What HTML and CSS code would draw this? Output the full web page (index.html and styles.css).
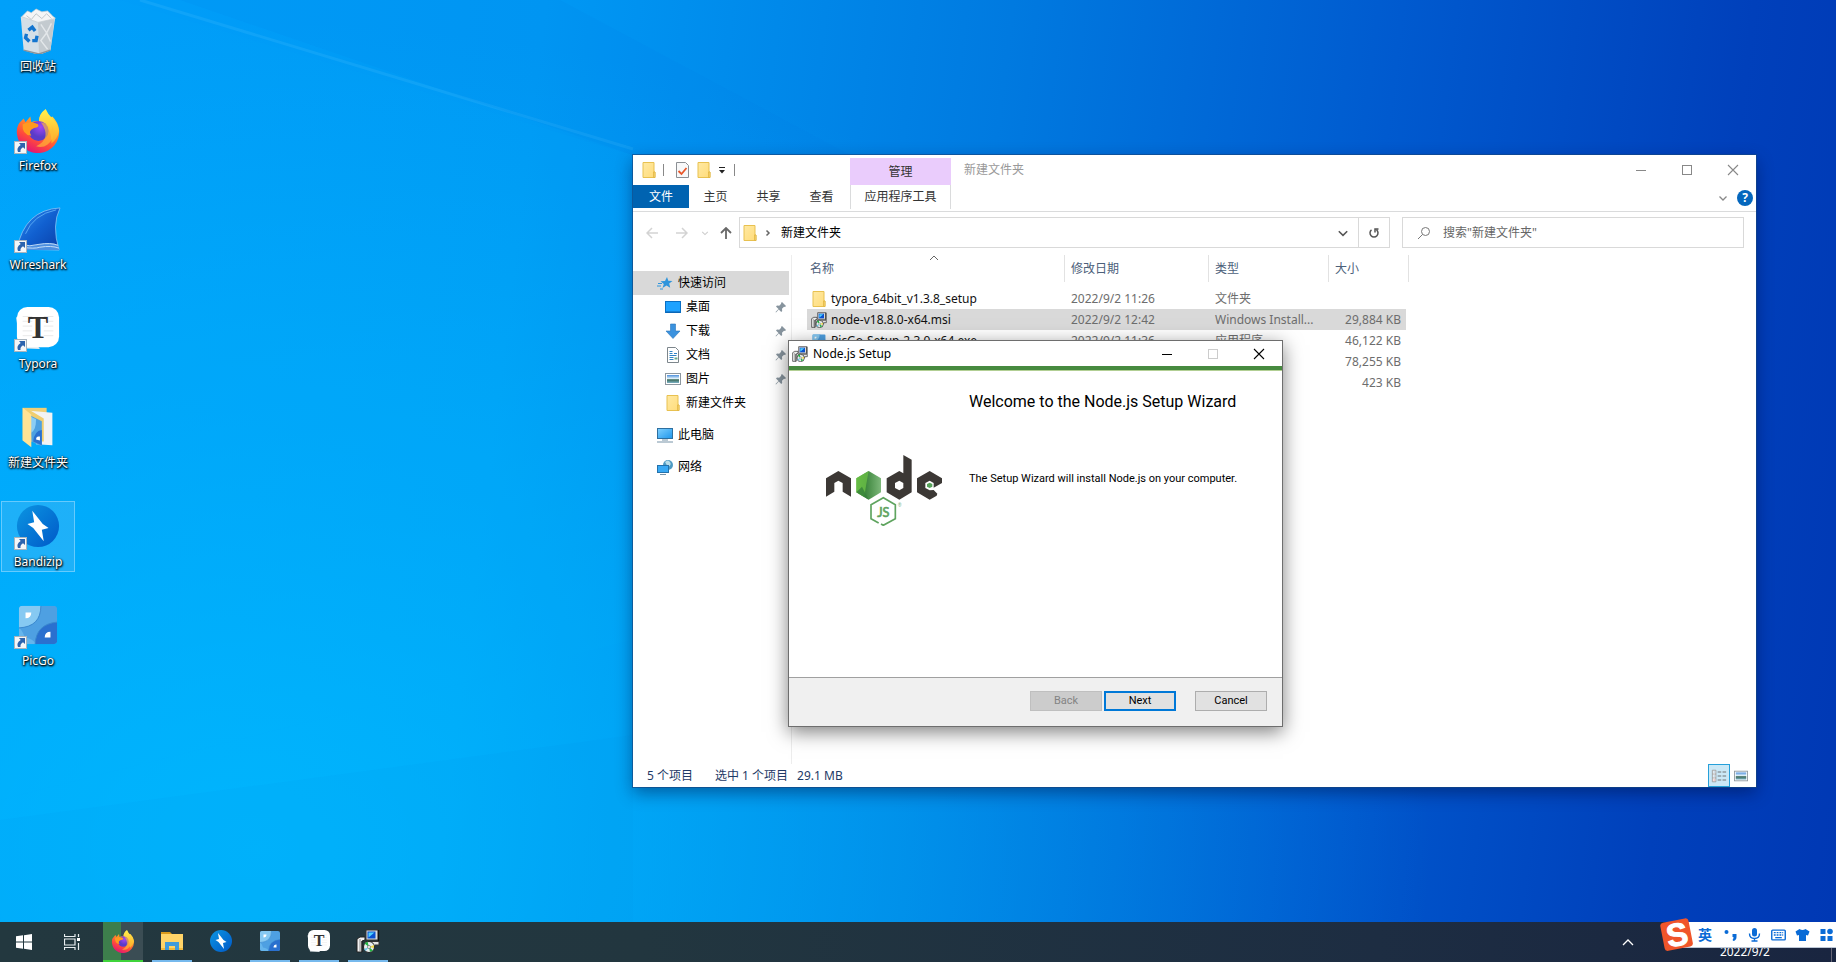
FILE: index.html
```html
<!DOCTYPE html>
<html lang="zh-CN">
<head>
<meta charset="utf-8">
<title>Desktop</title>
<link rel="stylesheet" href="styles.css">
</head>
<body>
<svg class="defs" aria-hidden="true">
  <defs>
    <linearGradient id="gFox" x1=".8" y1="0" x2=".3" y2="1"><stop offset="0" stop-color="#fff04a"/><stop offset=".35" stop-color="#ff9a28"/><stop offset=".7" stop-color="#ff4a3c"/><stop offset="1" stop-color="#e0107a"/></linearGradient>
    <radialGradient id="gGlobe" cx=".6" cy=".3"><stop offset="0" stop-color="#a347f5"/><stop offset="1" stop-color="#5a3cc8"/></radialGradient>
    <linearGradient id="gFlame" x1=".5" y1="0" x2=".5" y2="1"><stop offset="0" stop-color="#fff34f"/><stop offset="1" stop-color="#ffa726"/></linearGradient>
    <linearGradient id="gFin" x1="0" y1="0" x2="1" y2="1"><stop offset="0" stop-color="#2f8df0"/><stop offset=".5" stop-color="#1160d0"/><stop offset="1" stop-color="#0a3fa8"/></linearGradient>
    <linearGradient id="gBandi" x1="0" y1="0" x2="1" y2="1"><stop offset="0" stop-color="#0b95e2"/><stop offset="1" stop-color="#0059c8"/></linearGradient>
    <linearGradient id="gFolder" x1="0" y1="0" x2="1" y2="1"><stop offset="0" stop-color="#ffe9a3"/><stop offset="1" stop-color="#ffdc7a"/></linearGradient>
    <linearGradient id="gNode" x1="0" y1="0" x2="1" y2="0"><stop offset="0" stop-color="#65bc46"/><stop offset=".4" stop-color="#3f873f"/><stop offset="1" stop-color="#7db87a"/></linearGradient>
    <linearGradient id="gScreen" x1="0" y1="0" x2="1" y2="1"><stop offset="0" stop-color="#7fd0ff"/><stop offset="1" stop-color="#1e96ec"/></linearGradient>
    <linearGradient id="gPhoto" x1="0" y1="0" x2="0" y2="1"><stop offset="0" stop-color="#4c8fdc"/><stop offset=".45" stop-color="#e2f2fb"/><stop offset=".6" stop-color="#3d6b5a"/><stop offset="1" stop-color="#7cb2c6"/></linearGradient>
    <clipPath id="cPic"><rect x="4" y="4" width="40" height="40" rx="4"/></clipPath>
  </defs>
  <symbol id="i-shortcut" viewBox="0 0 13 13"><rect x=".5" y=".5" width="12" height="12" fill="#f4f6f8" stroke="#a9b4bd"/><path d="M5 2h6v6L9 6.300Q6 8 6.500 11H4Q2 7 6.700 4z" fill="#2c63ae"/></symbol>
  <symbol id="i-firefox" viewBox="0 0 48 48">
    <path d="M9 12l2 4 5-6 1 6q4-2 8-1 0-8 7-12 1 5 5 8l2-1q6 6 7 14a22 22 0 0 1-44 4q-1-9 5-14z" fill="url(#gFox)"/>
    <path d="M25 15q0-8 7-13 2 5 7 10 6 5 7 13-2 9-8 13 1-17-13-23z" fill="url(#gFlame)"/>
    <circle cx="24.500" cy="25" r="10.500" fill="url(#gGlobe)"/>
    <path d="M8 18q8-4 16 0 2 3-4 4-7 3-3 8-10-1-9-12z" fill="#ff9a1f"/><path d="M27 16q9 1 10 11 3-4 1-8 6 12-4 20-5 4-12 2 17-8 5-25z" fill="#ffbd35" opacity=".65"/>
  </symbol>
  <symbol id="i-bandizip" viewBox="0 0 48 48"><circle cx="24" cy="24" r="22" fill="url(#gBandi)"/><path d="M18 8l11 14 6 4-7 2 2 12-11-14-6-4 7-2z" fill="#fff"/></symbol>
  <symbol id="i-picgo" viewBox="0 0 48 48"><g clip-path="url(#cPic)"><rect x="4" y="4" width="40" height="40" fill="#4ea0e2"/><path d="M4 4h23Q27 26 4 27z" fill="#86c9f2"/><path d="M4 27q4 2 6 10 9 1 12 7H4z" fill="#65b5ec"/><path d="M44 21v23H21q1-21 23-23z" fill="#2a70cf"/><path d="M27 4Q27 26 4 27M44 21Q22 23 21 44" fill="none" stroke="#3a86cd"/><path d="M11 11h6q0 6-6 6zM37 31v6h-6q0-6 6-6z" fill="#fff"/></g></symbol>
  <symbol id="i-typora" viewBox="0 0 48 48"><path d="M1 12l5 33 20 1z" fill="#e8ecef"/><rect x="2" y="2" width="44" height="42" rx="11" fill="#fff"/><path d="M8 12h32M8 17h32M8 22h32M8 27h32M8 32h32" stroke="#e8e8e8"/><rect x="18" y="10" width="12" height="24" fill="#fff"/><text x="24" y="34" class="glyph-t">T</text></symbol>
  <symbol id="i-folder" viewBox="0 0 16 16"><path d="M2 .5h11v9.500h1v5.500H2z" fill="url(#gFolder)" stroke="#e8c150"/><path d="M12.500 15.500V10h1.500v5.500z" fill="#f8d775" stroke="#e0b13c" stroke-width=".7"/></symbol>
  <symbol id="i-installer" viewBox="0 0 24 24">
    <path d="M1 10l3-2h5v3l-3 1v11H1z" fill="#f2f2f2" stroke="#222"/><path d="M4 10v12" stroke="#888"/><path d="M6 12v11" stroke="#222"/>
    <path d="M10 1h12v10H10z" fill="#dcdcdc" stroke="#333"/><rect x="11.500" y="2.500" width="8" height="7" fill="#0a50d0"/><path d="M12.500 8.500V3.500h6z" fill="#4fd2ff"/>
    <path d="M22.500 1v11" stroke="#111" stroke-width="1.200"/>
    <path d="M9 12.500h14v3.500h-4v2H9z" fill="#e4e4e4" stroke="#333"/>
    <circle cx="13" cy="18" r="5.500" fill="#e9eeee" stroke="#222"/><path d="M13 18L8.500 14.500l3-2zM13 18l4 3.500-3 1.500z" fill="#25b545"/><path d="M13 18l5-2v3z" fill="#f2d94a"/><path d="M13 18l-5 2 1.500 2z" fill="#6cc9e8"/><circle cx="13" cy="18" r="1.500" fill="#fff" stroke="#555" stroke-width=".6"/>
  </symbol>
  <symbol id="i-photo" viewBox="0 0 16 16"><rect x=".5" y="2.500" width="15" height="11" fill="#fff" stroke="#8d979f"/><rect x="2" y="4" width="12" height="8" fill="url(#gPhoto)"/></symbol>
  <symbol id="i-pin" viewBox="0 0 12 12"><path d="M7 1l4 4-1 1-1-.2-2 2 .2 2.200-1 1-2.400-2.400L1 11.500.500 11l3-3L1 5.600l1-1 2.200.2 2-2L6 2z" fill="#87949e"/></symbol>
  <symbol id="i-chev" viewBox="0 0 10 10"><path d="M1.500 3.500L5 7l3.500-3.500" fill="none" stroke="currentColor" stroke-width="1.300"/></symbol>
  <symbol id="i-close" viewBox="0 0 12 12"><path d="M1 1l10 10M11 1L1 11" stroke="currentColor" fill="none" stroke-width="1.100"/></symbol>
  <symbol id="i-max" viewBox="0 0 12 12"><rect x="1.500" y="1.500" width="9" height="9" fill="none" stroke="currentColor"/></symbol>
  <symbol id="i-min" viewBox="0 0 12 12"><path d="M1 6.500h10" stroke="currentColor"/></symbol>
</svg>

<main class="desktop">
  <svg class="rays" viewBox="0 0 1836 922" preserveAspectRatio="none" aria-hidden="true">
    <path d="M120 0L633 155V640L0 800V0z" fill="#00b0ff" opacity=".08"/>
    <path d="M140 0L633 149" stroke="#5cc8ff" stroke-width="3" opacity=".16"/>
    <path d="M560 0L850 155H633L180 0z" fill="#0070e0" opacity=".07"/>
    <path d="M0 820L633 735V922H0z" fill="#0090e8" opacity=".08"/>
  </svg>
  <nav class="shortcuts" aria-label="桌面图标">
    <a class="shortcut" href="#"><span class="art"><svg viewBox="0 0 48 48">
      <path d="M6 9l36 1-5 34-12 5-16-5z" fill="#dfe3e6" opacity=".95"/><path d="M24 12h17l-4 32-12 5z" fill="#c3cacf"/>
      <path d="M7 9l6-6 4 2 5-4 6 3 6-1 5 5 3 3-18 4z" fill="#f4f5f6" stroke="#c2c9ce" stroke-width=".7"/><path d="M27 17l6 9-6 8 7 9M38 16l-5 10 4 9" fill="none" stroke="#e3e7ea" stroke-width="1.500"/>
      <path d="M12 8l5 4 5-6 6 5 5-5 5 5" fill="none" stroke="#bdc4c9"/>
      <path d="M14 23l4-3 3 4M12 27l-1 4 4 4M18 34h4l1-5" fill="none" stroke="#1375cf" stroke-width="3.500"/><path d="M9 44l16 4 12-4" fill="none" stroke="#89939a" stroke-width="1.500"/></svg></span><span class="label">回收站</span></a>
    <a class="shortcut" href="#"><span class="art"><svg><use href="#i-firefox"/></svg><svg class="arrow"><use href="#i-shortcut"/></svg></span><span class="label">Firefox</span></a>
    <a class="shortcut" href="#"><span class="art"><svg viewBox="0 0 48 48"><path d="M47 2Q38 20 46 46L2 45Q10 4 47 2z" fill="url(#gFin)" stroke="#8ec2f2" stroke-width=".8"/><path d="M4 40q12 3 22 0 12-3 19 1l1 5H3z" fill="#4d8fe0"/><path d="M5 40q11 3 20 0 12-2 20 1M8 43q12 2 18 0 12-2 20 1" fill="none" stroke="#c7e0f8"/><path d="M11 29Q19 9 43 4" fill="none" stroke="#5aa9f5"/></svg><svg class="arrow"><use href="#i-shortcut"/></svg></span><span class="label">Wireshark</span></a>
    <a class="shortcut" href="#"><span class="art"><svg><use href="#i-typora"/></svg><svg class="arrow"><use href="#i-shortcut"/></svg></span><span class="label">Typora</span></a>
    <a class="shortcut" href="#"><span class="art"><svg viewBox="0 0 48 48"><path d="M8 4h25v34H8z" fill="#efcf76"/><path d="M15 7l24 2v34l-17-1z" fill="#f2f3f4"/><path d="M13 5l17 10v24H16z" fill="#f0ce70"/><path d="M16 12l12 6v26l-11-5z" fill="#4da1e1"/><path d="M16 13l6 3q0 11-5 14z" fill="#8bcdf4"/><path d="M28 27v16l-9-4q1-11 9-12z" fill="#2a70cf"/><path d="M26 34v4l-4-1q0-4 4-3z" fill="#fff"/><path d="M8 4l9 7v34L8 38z" fill="#ffe394"/></svg></span><span class="label">新建文件夹</span></a>
    <a class="shortcut hovered" href="#"><span class="art"><svg><use href="#i-bandizip"/></svg><svg class="arrow"><use href="#i-shortcut"/></svg></span><span class="label">Bandizip</span></a>
    <a class="shortcut" href="#"><span class="art"><svg><use href="#i-picgo"/></svg><svg class="arrow"><use href="#i-shortcut"/></svg></span><span class="label">PicGo</span></a>
  </nav>

  <section class="explorer" aria-label="新建文件夹">
    <header class="titlebar">
      <div class="quick">
        <svg class="ic16"><use href="#i-folder"/></svg><i class="bar"></i>
        <svg class="ic16 gap-l" viewBox="0 0 16 16"><path d="M2.500.500h9l3 3v12h-12z" fill="#f7f8f9" stroke="#8b8f94"/><path d="M4.500 9l3 3 5-6" fill="none" stroke="#e8562a" stroke-width="1.800"/></svg>
        <svg class="ic16"><use href="#i-folder"/></svg>
        <svg class="drop" viewBox="0 0 8 8"><path d="M1 .5h6" stroke="#222"/><path d="M1 3h6L4 6.500z" fill="#222"/></svg><i class="bar"></i>
      </div>
      <div class="context-tab">管理</div>
      <h1 class="caption">新建文件夹</h1>
      <div class="winbtns grey">
        <button aria-label="最小化"><svg><use href="#i-min"/></svg></button><button aria-label="最大化"><svg><use href="#i-max"/></svg></button><button aria-label="关闭"><svg><use href="#i-close"/></svg></button>
      </div>
    </header>
    <nav class="ribbon" aria-label="功能区">
      <button class="tab file">文件</button><button class="tab">主页</button><button class="tab">共享</button><button class="tab">查看</button><button class="tab tools">应用程序工具</button>
      <span class="ribbon-end"><svg class="ic10"><use href="#i-chev"/></svg><button class="help" aria-label="帮助">?</button></span>
    </nav>
    <div class="address-row">
      <div class="history">
        <svg viewBox="0 0 12 12"><path d="M12 6H1M6 1L1 6l5 5" fill="none" stroke="#d3d3d3" stroke-width="1.500"/></svg>
        <svg viewBox="0 0 12 12"><path d="M0 6h11M6 1l5 5-5 5" fill="none" stroke="#d3d3d3" stroke-width="1.500"/></svg>
        <svg class="tiny"><use href="#i-chev"/></svg>
        <svg viewBox="0 0 12 12"><path d="M6 12V1M1 6l5-5 5 5" fill="none" stroke="#686868" stroke-width="1.800"/></svg>
      </div>
      <div class="address"><svg class="ic16"><use href="#i-folder"/></svg><svg class="crumb-sep" viewBox="0 0 10 10"><path d="M3.500 2.500L6 5 3.500 7.500" fill="none" stroke="#666" stroke-width="1.500"/></svg><a href="#">新建文件夹</a><button class="addr-drop" aria-label="历史"><svg class="ic12"><use href="#i-chev"/></svg></button><button class="refresh" aria-label="刷新"><svg viewBox="0 0 12 12"><path d="M8.500 2.800A4 4 0 1 1 3.500 2.800M1.500 2h3.500V5.500" fill="none" stroke="#555" stroke-width="1.500"/></svg></button></div>
      <label class="search"><svg viewBox="0 0 14 14"><circle cx="8.500" cy="5.500" r="4" fill="none" stroke="#777"/><path d="M5.500 8.500L1 13" stroke="#777"/></svg><input type="text" aria-label="搜索" placeholder='搜索"新建文件夹"'></label>
    </div>
    <div class="body">
      <nav class="tree" aria-label="导航窗格">
        <a href="#" class="top current"><svg viewBox="0 0 16 16"><path d="M10 2l1.300 3.800 4.200.2-3.300 2.600 1 4.200L9.500 10.500 5.500 13l1.300-4L3.500 6.200l4.500-.2z" fill="#2f95dc"/><path d="M1 8.500h4M0 11h4M3 14h3" stroke="#2f95dc"/></svg><span>快速访问</span></a>
        <a href="#"><svg viewBox="0 0 16 16"><rect x=".5" y="2.500" width="15" height="11" fill="#1ea2ff" stroke="#0a6fc4"/><path d="M1 13h14" stroke="#0c5ea8"/></svg><span>桌面</span><svg class="pin"><use href="#i-pin"/></svg></a>
        <a href="#"><svg viewBox="0 0 16 16"><path d="M5.500 1h5v7H15l-7 7.500L1 8h4.500z" fill="#3b92de" stroke="#2a76bb" stroke-width=".6"/></svg><span>下载</span><svg class="pin"><use href="#i-pin"/></svg></a>
        <a href="#"><svg viewBox="0 0 16 16"><path d="M2.500.500h8l3 3v12h-11z" fill="#fff" stroke="#7d868c"/><path d="M4.500 4.500h3M4.500 6.500h3M9 6.500h3M4.500 8.500h7M4.500 10.500h4M4.500 12.500h4" stroke="#2f84c6"/><path d="M9.500 10.500h3v2h-3z" fill="#6aa88a"/></svg><span>文档</span><svg class="pin"><use href="#i-pin"/></svg></a>
        <a href="#"><svg><use href="#i-photo"/></svg><span>图片</span><svg class="pin"><use href="#i-pin"/></svg></a>
        <a href="#"><svg><use href="#i-folder"/></svg><span>新建文件夹</span></a>
        <a href="#" class="top"><svg viewBox="0 0 16 16"><rect x=".5" y="1.500" width="15" height="10" fill="url(#gScreen)" stroke="#2e6f9f"/><path d="M5 13h6M0 15h16" stroke="#7693a8"/></svg><span>此电脑</span></a>
        <a href="#" class="top"><svg viewBox="0 0 16 16"><circle cx="11" cy="6" r="5" fill="#4e9bc4"/><path d="M8 3q3-3 5 0 2 3-2 5z" fill="#b9dde9"/><rect x=".5" y="6.500" width="11" height="7" fill="#39a9f4" stroke="#2472ac"/><path d="M3 15.500h6" stroke="#7693a8"/></svg><span>网络</span></a>
      </nav>
      <div class="files">
        <table>
          <colgroup><col class="c-name"><col class="c-date"><col class="c-type"><col class="c-size"></colgroup>
          <thead><tr><th>名称<svg class="sort" viewBox="0 0 10 6"><path d="M1 5l4-4 4 4" fill="none" stroke="#666"/></svg></th><th>修改日期</th><th>类型</th><th>大小</th></tr></thead>
          <tbody>
            <tr><td><span class="file-name"><svg><use href="#i-folder"/></svg>typora_64bit_v1.3.8_setup</span></td><td>2022/9/2 11:26</td><td>文件夹</td><td></td></tr>
            <tr class="selected"><td><span class="file-name"><svg><use href="#i-installer"/></svg>node-v18.8.0-x64.msi</span></td><td>2022/9/2 12:42</td><td>Windows Install...</td><td>29,884 KB</td></tr>
            <tr><td><span class="file-name"><svg><use href="#i-picgo"/></svg>PicGo-Setup-2.3.0-x64.exe</span></td><td>2022/9/2 11:36</td><td>应用程序</td><td>46,122 KB</td></tr>
            <tr><td></td><td></td><td></td><td>78,255 KB</td></tr>
            <tr><td></td><td></td><td></td><td>423 KB</td></tr>
          </tbody>
        </table>
      </div>
    </div>
    <footer class="status"><span>5 个项目</span><span class="picked">选中 1 个项目</span><span>29.1 MB</span>
      <div class="views"><button class="on" aria-label="详细信息"><svg viewBox="0 0 18 14"><path d="M1.500.500h4v13h-4zM1.500 4.800h4M1.500 9.200h4" fill="#fff" stroke="#999"/><path d="M7.500 2.500h4m1.500 0h4M7.500 7h4m1.500 0h4M7.500 11.500h4m1.500 0h4" stroke="#666"/><path d="M3 2.500h1M3 7h1" stroke="#37a"/><path d="M3 11.500h1" stroke="#c22"/></svg></button><button aria-label="大图标"><svg><use href="#i-photo"/></svg></button></div>
    </footer>
  </section>

  <section class="setup" role="dialog" aria-label="Node.js Setup">
    <header class="setup-title"><svg class="ic16"><use href="#i-installer"/></svg><span>Node.js Setup</span>
      <div class="winbtns"><button aria-label="最小化"><svg><use href="#i-min"/></svg></button><button aria-label="最大化" disabled><svg><use href="#i-max"/></svg></button><button aria-label="关闭"><svg><use href="#i-close"/></svg></button></div>
    </header>
    <div class="setup-body">
      <svg class="node-logo" viewBox="138 375 351 213" role="img" aria-label="node js">
        <g fill="#3c3835"><path d="M138 500V445L175 423 213 445V500L188 485V459L175 452 163 459V485z"/>
        <path fill-rule="evenodd" d="M370 375L395 389V487L358 509 320 487V445L358 423 370 430zM358 452L345 459V474L358 481 370 474V459z"/>
        <path d="M449 423L486 445V459L461 473V459L449 452 436 459V474L449 481 461 480 472 491 470 497 449 509 411 487V445z"/></g>
        <path d="M266 423L303 445V487L266 509 229 487V445z" fill="url(#gNode)"/><path d="M229 445L266 423 252 501 229 487z" fill="#68bd45" opacity=".8"/><path d="M266 509L229 487 246 470z" fill="#35803a" opacity=".8"/>
        <path d="M449 458L457 462V470L449 474 441 470V462z" fill="#56a35a"/>
        <path d="M296 579L273 566V524L310 503 346 524V566L310 586 303 582" fill="none" stroke="#5fa45f" stroke-width="5"/>
        <text x="310" y="560" class="glyph-js">JS</text><text x="359" y="530" class="glyph-r">®</text>
      </svg>
      <div class="setup-copy"><h2>Welcome to the Node.js Setup Wizard</h2><p>The Setup Wizard will install Node.js on your computer.</p></div>
    </div>
    <footer class="setup-actions"><button disabled>Back</button><button class="primary">Next</button><button class="cancel">Cancel</button></footer>
  </section>
</main>

<footer class="taskbar">
  <button class="sys" aria-label="开始"><svg viewBox="0 0 16 16"><path d="M0 2.300L7 1.300V7.500H0zM8 1.200L16 0V7.500H8zM0 8.500H7V14.700L0 13.700zM8 8.500h8V16L8 14.800z" fill="#fff"/></svg></button>
  <button class="sys" aria-label="任务视图"><svg viewBox="0 0 16 16"><path d="M.5 0v2.500h10.500V0M.5 16v-2.500h10.500V16M.500 5h10.500v6H.500zM14.500 0v3M14.500 9v7" fill="none" stroke="#e8eef0" stroke-width="1.200"/><path d="M13 4h3v3h-3z" fill="#fff"/></svg></button>
  <div class="apps">
    <button class="progress" aria-label="Firefox"><svg><use href="#i-firefox"/></svg></button>
    <button class="open stacked" aria-label="文件资源管理器"><svg viewBox="0 0 24 24"><path d="M1 3h9l2 2h-3v2H1z" fill="#d99a1c"/><path d="M1 5h22v16H1z" fill="#ffd468"/><path d="M1 19h22v2H1z" fill="#f2b93b"/><path d="M5 13h14v8h-4v-4H9v4H5z" fill="#3f9bdc"/></svg></button>
    <button aria-label="Bandizip"><svg><use href="#i-bandizip"/></svg></button>
    <button class="open" aria-label="PicGo"><svg><use href="#i-picgo"/></svg></button>
    <button class="open" aria-label="Typora"><svg><use href="#i-typora"/></svg></button>
    <button class="open" aria-label="Node.js Setup"><svg><use href="#i-installer"/></svg></button>
  </div>
  <div class="tray">
    <svg class="tray-up" viewBox="0 0 12 8"><path d="M1 7l5-5 5 5" fill="none" stroke="#fff" stroke-width="1.300"/></svg>
    <time>2022/9/2</time><i class="peek"></i>
  </div>
  <div class="ime">
    <svg class="sogou" viewBox="0 0 32 32"><g transform="rotate(-11 16 16)"><rect x="2" y="3" width="27" height="27" rx="3" fill="#f0552a"/><text x="16" y="27" class="glyph-s">S</text></g></svg>
    <span class="lang">英</span>
    <svg viewBox="0 0 14 14"><circle cx="3" cy="4" r="2" fill="#0a6bd6"/><path d="M9 6h4v3q0 3-3 4l-1-1q1-1 1-3H9z" fill="#0a6bd6"/></svg>
    <svg viewBox="0 0 14 14"><rect x="4.500" y="0" width="5" height="8.500" rx="2.500" fill="#0a6bd6"/><path d="M2 5.500q0 5 5 5t5-5M7 10v3M4 13h6" fill="none" stroke="#0a6bd6" stroke-width="1.400"/></svg>
    <svg viewBox="0 0 16 14"><rect x=".8" y="1.800" width="14.400" height="10.400" rx="1" fill="none" stroke="#0a6bd6" stroke-width="1.500"/><path d="M3 4.500h10M3 7h10" stroke="#0a6bd6" stroke-width="1.500" stroke-dasharray="2 1"/><path d="M4.500 9.800h7" stroke="#0a6bd6" stroke-width="1.400"/></svg>
    <svg viewBox="0 0 14 14"><path d="M4 1q3 2 6 0l4 2.500-1.500 4L10.500 7v6h-7V7l-2 .5L0 3.500z" fill="#0a6bd6"/></svg>
    <svg viewBox="0 0 14 14"><path d="M1 1h5v5H1zM1 8h5v5H1zM8 8h5v5H8z" fill="#0a6bd6"/><circle cx="10.500" cy="3.500" r="2.800" fill="#0a6bd6"/></svg>
  </div>
</footer>
</body>
</html>
```
FILE: styles.css
```css
* { box-sizing: border-box; }
body {
  margin: 0;
  height: 100vh;
  display: flex;
  flex-direction: column;
  overflow: hidden;
  font: 12px/16px "Noto Sans", "Noto Sans CJK SC", sans-serif;
  color: #000;
}
a { color: inherit; text-decoration: none; }
button { font: inherit; color: inherit; border: 0; padding: 0; background: none; }
svg { display: block; flex: none; }
.defs { position: absolute; width: 0; height: 0; }
.glyph-t { font: bold 32px "Liberation Serif", serif; text-anchor: middle; fill: #333; }
.glyph-js { font: 38px Lato, sans-serif; text-anchor: middle; fill: #5fa45f; stroke: #5fa45f; stroke-width: 2px; }
.glyph-r { font: 14px "Liberation Sans", sans-serif; text-anchor: middle; fill: #5fa45f; }
.glyph-s { font: bold 30px "Liberation Sans", sans-serif; text-anchor: middle; fill: #fff; stroke: #fff; }
.ic16 { width: 16px; height: 16px; }
.ic12 { width: 12px; height: 12px; }
.ic10 { width: 10px; height: 10px; }

.desktop {
  position: relative;
  flex: 1;
  min-height: 0;
  background:
    radial-gradient(ellipse 64% 90% at 14% 92%, rgba(0, 190, 255, .75), rgba(0, 170, 255, 0)),
    linear-gradient(97deg, #009ffa 0%, #0098f4 28%, #007ae0 52%, #005acf 72%, #0040bb 90%, #0038b4 100%);
}
.rays { position: absolute; inset: 0; width: 100%; height: 100%; }

.shortcuts { position: relative; display: flex; flex-direction: column; gap: 28px; padding: 6px 1px; width: 76px; }
.shortcut { display: flex; flex-direction: column; align-items: center; height: 71px; border: 1px solid transparent; }
.shortcut.hovered { background: rgba(120, 190, 240, .25); border-color: rgba(150, 220, 255, .6); }
.art { position: relative; width: 48px; height: 51px; }
.art > svg { width: 46px; height: 46px; margin: 1px; }
.art > .arrow { position: absolute; left: 0; bottom: 3px; width: 13px; height: 13px; margin: 0; }
.label { color: #fff; line-height: 18px; white-space: nowrap; text-shadow: 1px 1px 2px #000, 0 1px 2px #000, 0 0 2px rgba(0, 0, 0, .7); }

.explorer {
  position: absolute;
  left: 633px;
  top: 155px;
  right: 80px;
  bottom: 135px;
  display: flex;
  flex-direction: column;
  background: #fff;
  outline: 1px solid rgba(20, 70, 130, .65);
  box-shadow: 0 6px 16px rgba(0, 10, 60, .45);
}
.titlebar { display: flex; height: 30px; align-items: flex-end; }
.quick { display: flex; align-items: center; align-self: stretch; width: 217px; padding-left: 8px; gap: 6px; }
.quick .bar { width: 1px; height: 12px; background: #888; }
.quick .gap-l { margin-left: 4px; }
.drop { width: 8px; height: 8px; margin: 2px 2px 0 0; }
.context-tab { width: 101px; height: 27px; background: #eaccfc; text-align: center; line-height: 27px; color: #333; }
.caption { margin: 0 0 0 13px; font-size: 12px; font-weight: 400; line-height: 30px; color: #999; }
.winbtns { display: flex; margin-left: auto; align-self: stretch; }
.winbtns button { width: 46px; display: grid; place-items: center; }
.winbtns svg { width: 12px; height: 12px; }
.grey { color: #888; }
.ribbon { display: flex; height: 27px; border-bottom: 1px solid #dadbdc; color: #333; }
.tab { width: 53px; height: 24px; }
.tab.file { width: 56px; height: 23px; background: #0063b1; color: #fff; }
.tab.tools { width: 101px; margin-left: 2px; border: solid #dadbdc; border-width: 0 1px; }
.ribbon-end { display: flex; align-items: center; gap: 9px; margin: 0 3px 0 auto; color: #888; }
.help { width: 16px; height: 16px; border-radius: 50%; background: #0567bd; color: #fff; font-weight: 700; line-height: 16px; }
.address-row { display: flex; padding: 5px 12px 0 13px; }
.history { display: flex; align-items: center; width: 93px; gap: 18px; color: #ccc; }
.history svg { width: 12px; height: 12px; }
.history .tiny { width: 8px; margin: 0 -7px 0 -5px; }
.address { flex: 1; display: flex; align-items: center; height: 31px; padding-left: 2px; border: 1px solid #d9d9d9; }
.crumb-sep { width: 10px; height: 10px; margin: 0 8px 0 5px; }
.addr-drop { margin-left: auto; width: 30px; align-self: stretch; display: grid; place-items: center; color: #555; }
.refresh { width: 31px; align-self: stretch; display: grid; place-items: center; border-left: 1px solid #d9d9d9; }
.refresh svg { width: 12px; height: 12px; transform: scaleX(-1); }
.search { width: 342px; margin-left: 12px; display: flex; align-items: center; padding: 0 14px; gap: 12px; border: 1px solid #d9d9d9; }
.search svg { width: 14px; height: 14px; }
.search input { flex: 1; min-width: 0; border: 0; padding: 0; outline: 0; font: inherit; background: none; }
.search input::placeholder { color: #666; opacity: 1; }
.body { flex: 1; min-height: 0; display: flex; padding-top: 7px; }
.tree { width: 159px; padding: 16px 2px 0 0; border-right: 1px solid #ededed; }
.tree a { display: flex; align-items: center; height: 24px; padding: 0 2px 0 32px; gap: 5px; }
.tree svg { width: 16px; height: 16px; }
.tree .pin { width: 12px; height: 12px; margin-left: auto; }
.tree .top { padding-left: 24px; margin-top: 8px; }
.tree .current { margin-top: 0; background: #d9d9d9; }
.files { flex: 1; padding-left: 15px; }
table { width: 602px; table-layout: fixed; border-collapse: separate; border-spacing: 0; color: #6d6d6d; }
.c-name { width: 258px; }
.c-date { width: 144px; }
.c-type { width: 120px; }
.c-size { width: 80px; }
th { position: relative; height: 33px; padding: 0 6px 6px; text-align: left; font-weight: 400; color: #4c607a; background: linear-gradient(#e2e2e2, #e2e2e2) right top / 1px 27px no-repeat; }
th:first-child { padding-left: 3px; }
.sort { position: absolute; left: 122px; top: 0; width: 10px; height: 6px; }
td { height: 21px; padding: 0 6px; line-height: 18px; white-space: nowrap; }
td:first-child { padding: 0 0 0 4px; color: #111; }
td:last-child { padding-right: 5px; text-align: right; border-right: 3px solid transparent; background-clip: padding-box; }
.selected td { background-color: #d9d9d9; }
.file-name { display: flex; align-items: center; gap: 4px; }
.file-name svg { width: 16px; height: 16px; }
.status { display: flex; align-items: center; height: 23px; padding-left: 14px; color: #1e3a66; }
.picked { margin: 0 9px 0 22px; }
.views { display: flex; margin: 0 4px 0 auto; align-self: stretch; }
.views button { width: 22px; display: grid; place-items: center; }
.views .on { background: #cbe8f6; border: 1px solid #26a0da; }
.views svg { width: 16px; height: 14px; }

.setup {
  position: absolute;
  left: 788px;
  top: 340px;
  width: 495px;
  height: 387px;
  display: flex;
  flex-direction: column;
  background: #fff;
  border: 1px solid #6e6e6e;
  box-shadow: 0 5px 18px rgba(0, 0, 0, .5);
}
.setup-title { display: flex; align-items: center; height: 25px; padding-left: 3px; gap: 5px; }
.setup-title .winbtns button:disabled { color: #ccc; }
.setup-body { flex: 1; display: flex; padding-left: 37px; border-top: 4px solid #478a3f; box-shadow: inset 0 1px #b2cf94; }
.node-logo { width: 117px; height: 71px; margin-top: 85px; }
.setup-copy { padding-left: 26px; }
.setup-copy h2 { margin: 21px 0 55px; font: 16px/22px Roboto, sans-serif; }
.setup-copy p { margin: 0; font: 11px/22px Roboto, sans-serif; }
.setup-actions { display: flex; height: 49px; padding: 13px 15px 0; justify-content: flex-end; background: #f0f0f0; border-top: 1px solid #a0a0a0; font: 11px/16px Roboto, sans-serif; }
.setup-actions button { width: 72px; height: 20px; border: 1px solid #adadad; background: #e1e1e1; }
.setup-actions button:disabled { background: #ccc; border-color: #bfbfbf; color: #838383; }
.setup-actions .primary { border: 2px solid #0078d7; margin: 0 19px 0 2px; }

.taskbar { position: relative; display: flex; height: 40px; background: linear-gradient(90deg, #23383f, #22363f 35%, #1d2d42 75%, #192540); }
.sys { width: 48px; display: grid; place-items: center; }
.sys svg { width: 16px; height: 16px; }
.apps { display: flex; gap: 9px; padding-left: 7px; }
.apps button { width: 40px; display: grid; place-items: center; border-bottom: 2px solid transparent; }
.apps svg { width: 24px; height: 24px; }
.apps .open { border-bottom-color: #76b9ed; }
.apps .progress { background: linear-gradient(90deg, #3d7e4c 45%, #3b4d54 45%); border-bottom-color: #3fd43b; }
.tray { display: flex; margin-left: auto; color: #fff; }
.tray-up { width: 12px; height: 8px; margin: 16px 86px 0 0; }
.tray time { padding-top: 22px; }
.peek { width: 1px; margin: 0 4px 0 61px; background: #667; }
.ime { position: absolute; right: 0; top: 0; height: 26px; display: flex; align-items: center; gap: 9px; width: 162px; padding-left: 24px; background: #fff; border-bottom: 1px solid #bcc7d6; }
.ime svg { width: 15px; height: 14px; }
.ime .sogou { position: absolute; left: -14px; top: -5px; width: 34px; height: 34px; }
.lang { flex: none; width: 16px; color: #0a6bd6; font-weight: 700; font-size: 14px; line-height: 24px; }
```
